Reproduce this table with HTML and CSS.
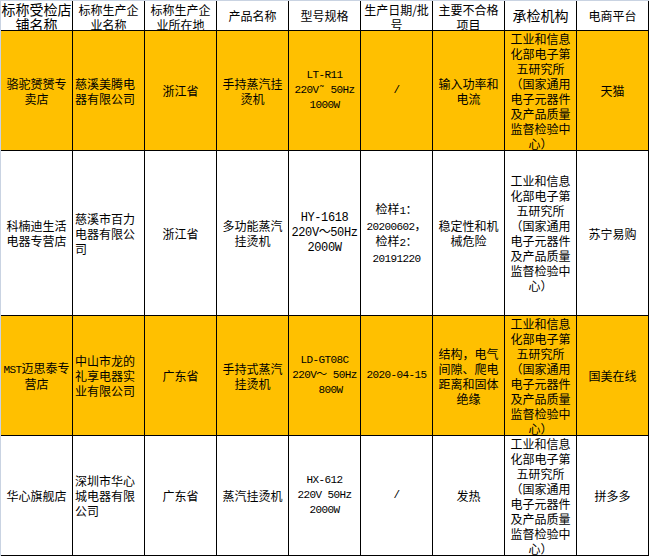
FILE: index.html
```html
<!DOCTYPE html>
<html lang="zh-CN">
<head>
<meta charset="utf-8">
<title>不合格产品清单</title>
<link rel="stylesheet" href="styles.css">
</head>
<body>
<div class="sheet">
  <div class="row head">
    <div class="cell two lg">标称受检店<br>铺名称</div>
    <div class="cell two">标称生产企<br>业名称</div>
    <div class="cell two">标称生产企<br>业所在地</div>
    <div class="cell">产品名称</div>
    <div class="cell">型号规格</div>
    <div class="cell two">生产日期/批<br>号</div>
    <div class="cell two">主要不合格<br>项目</div>
    <div class="cell lg">承检机构</div>
    <div class="cell">电商平台</div>
  </div>

  <div class="row yellow">
    <div class="cell">骆驼赟赟专<br>卖店</div>
    <div class="cell left">慈溪美腾电<br>器有限公司</div>
    <div class="cell">浙江省</div>
    <div class="cell">手持蒸汽挂<br>烫机</div>
    <div class="cell mono">LT-R11<br>220V˜ 50Hz<br>1000W</div>
    <div class="cell mono">/</div>
    <div class="cell">输入功率和<br>电流</div>
    <div class="cell">工业和信息<br>化部电子第<br>五研究所<br>（国家通用<br>电子元器件<br>及产品质量<br>监督检验中<br>心）</div>
    <div class="cell">天猫</div>
  </div>

  <div class="row">
    <div class="cell">科楠迪生活<br>电器专营店</div>
    <div class="cell left">慈溪市百力<br>电器有限公<br>司</div>
    <div class="cell">浙江省</div>
    <div class="cell">多功能蒸汽<br>挂烫机</div>
    <div class="cell mono wide">HY-1618<br>220V～50Hz<br>2000W</div>
    <div class="cell"><p class="txt">检样<span class="lat">1</span>：<br><span class="lat">20200602</span>，<br>检样<span class="lat">2</span>：<br><span class="lat">20191220</span></p></div>
    <div class="cell">稳定性和机<br>械危险</div>
    <div class="cell">工业和信息<br>化部电子第<br>五研究所<br>（国家通用<br>电子元器件<br>及产品质量<br>监督检验中<br>心）</div>
    <div class="cell">苏宁易购</div>
  </div>

  <div class="row yellow">
    <div class="cell"><p class="txt"><span class="lat">MST</span>迈思泰专<br>营店</p></div>
    <div class="cell left">中山市龙的<br>礼享电器实<br>业有限公司</div>
    <div class="cell">广东省</div>
    <div class="cell">手持式蒸汽<br>挂烫机</div>
    <div class="cell mono">LD-GT08C<br>220V～ 50Hz<br>&nbsp;&nbsp;800W</div>
    <div class="cell mono">2020-04-15</div>
    <div class="cell">结构，电气<br>间隙、爬电<br>距离和固体<br>绝缘</div>
    <div class="cell">工业和信息<br>化部电子第<br>五研究所<br>（国家通用<br>电子元器件<br>及产品质量<br>监督检验中<br>心）</div>
    <div class="cell">国美在线</div>
  </div>

  <div class="row">
    <div class="cell">华心旗舰店</div>
    <div class="cell left">深圳市华心<br>城电器有限<br>公司</div>
    <div class="cell">广东省</div>
    <div class="cell">蒸汽挂烫机</div>
    <div class="cell mono">HX-612<br>220V 50Hz<br>2000W</div>
    <div class="cell mono">/</div>
    <div class="cell">发热</div>
    <div class="cell">工业和信息<br>化部电子第<br>五研究所<br>（国家通用<br>电子元器件<br>及产品质量<br>监督检验中<br>心）</div>
    <div class="cell">拼多多</div>
  </div>
</div>
</body>
</html>
```

FILE: styles.css
```css
html, body {
  margin: 0;
  padding: 0;
  background: #ffffff;
}

.sheet {
  display: grid;
  grid-template-columns: repeat(9, 71px);
  grid-template-rows: 29px 119px 164px 119px 119px;
  gap: 1px;
  width: max-content;
  padding: 0 1px 1px 0;
  background: #000000;
  border-left: 1px solid #c9d3e2;
  border-top: 1px solid #c9d3e2;
  font-family: "Noto Sans CJK SC", "Noto Sans", sans-serif;
  font-size: 12px;
  line-height: 15px;
  color: #000000;
}

.row {
  display: contents;
}

.cell {
  display: flex;
  align-items: center;
  justify-content: center;
  text-align: center;
  white-space: nowrap;
  overflow: hidden;
  background: #ffffff;
}

.txt {
  margin: 0;
}

.yellow .cell {
  background: #ffc000;
}

.head .two {
  align-items: flex-start;
  padding-top: 1px;
}

.head .lg {
  font-size: 14px;
}

.left {
  justify-content: flex-start;
  text-align: left;
  padding-left: 2px;
}

.mono,
.lat {
  font-family: "Liberation Mono", "Noto Sans CJK SC", monospace;
  font-size: 11px;
  letter-spacing: -0.6px;
}

.mono.wide {
  font-size: 12px;
  letter-spacing: -0.4px;
}

.lat {
  line-height: 1;
}
```
